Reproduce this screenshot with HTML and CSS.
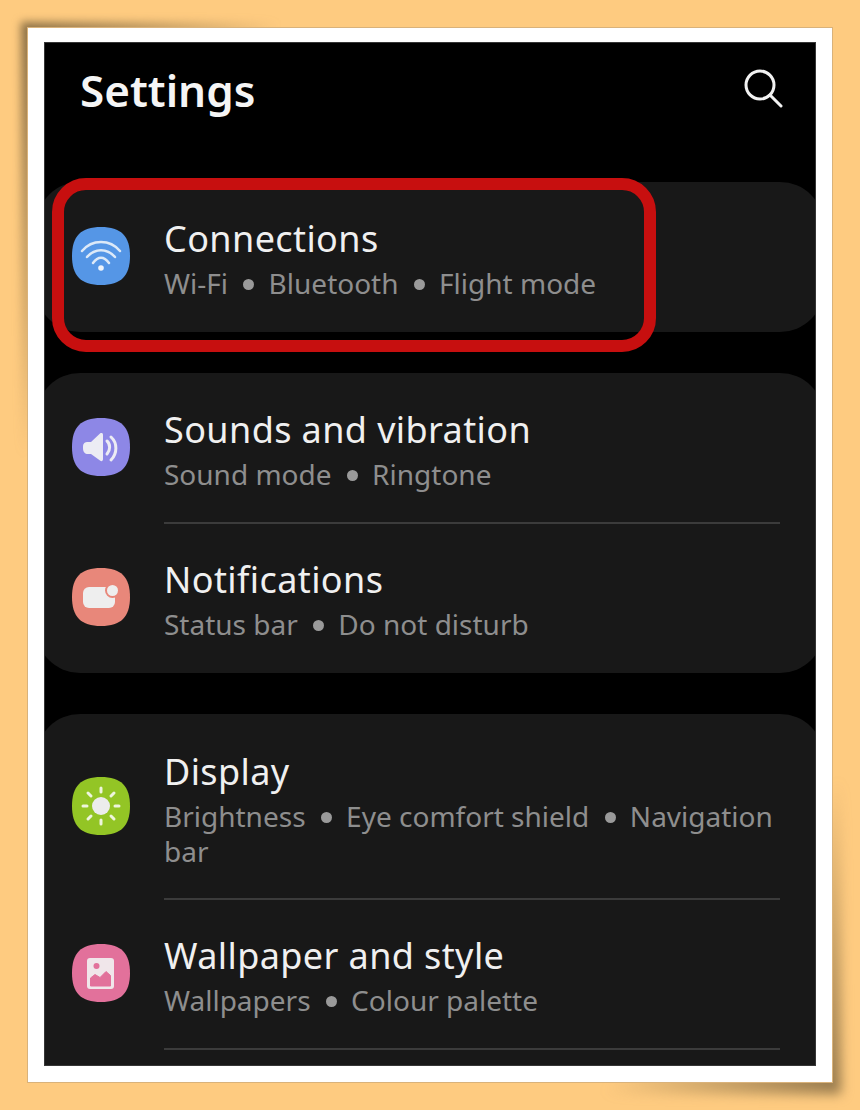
FILE: index.html
```html
<!DOCTYPE html>
<html>

<head>
  <meta charset="UTF-8">
  <title>Settings</title>
  <link rel="stylesheet" href="styles.css">
</head>

<body>

  <div class="frame">
    <div class="phone">

      <div class="header">
        <h1 class="titulo">Settings</h1>
        <svg class="lupa" width="40" height="40" viewBox="0 0 40 40">
          <circle cx="17" cy="16" r="14" fill="none" stroke="#f2f2f2" stroke-width="3" />
          <path d="M27 26 L38 37" fill="none" stroke="#f2f2f2" stroke-width="3" stroke-linecap="round" />
        </svg>
      </div>

      <div class="card">
        <div class="fila">
          <svg class="icono" width="58" height="58" viewBox="0 0 58 58">
            <path fill="#5596e6" d="M29 0C49 0 58 9 58 29S49 58 29 58 0 49 0 29 9 0 29 0Z" />
            <path d="M10 24C20 12 38 12 48 24M15 30C23 21 35 21 43 30M21 36C26 29 32 29 37 36" fill="none" stroke="#dce9f8" stroke-width="2.5" stroke-linecap="round" />
            <circle cx="29" cy="41" r="2.8" fill="#eef4fb" />
          </svg>
          <div class="texto">
            <div class="nombre">Connections</div>
            <div class="detalle">Wi-Fi <span class="punto"></span> Bluetooth <span class="punto"></span> Flight mode</div>
          </div>
        </div>
      </div>

      <div class="card">
        <div class="fila">
          <svg class="icono" width="58" height="58" viewBox="0 0 58 58">
            <path fill="#8d87e6" d="M29 0C49 0 58 9 58 29S49 58 29 58 0 49 0 29 9 0 29 0Z" />
            <path fill="#ececf4" d="M11 29C11 25 13 24 16 24H19L28 15.5C29.5 14.5 31 15 31 17V41C31 43 29.5 44 28 42.5L19 36H16C13 36 11 34 11 30Z" />
            <path d="M35 23C38.500 26 38.500 32 35 36M39 19C45.500 25 45.500 35 39 42" fill="none" stroke="#ececf4" stroke-width="3" stroke-linecap="round" />
          </svg>
          <div class="texto">
            <div class="nombre">Sounds and vibration</div>
            <div class="detalle">Sound mode <span class="punto"></span> Ringtone</div>
          </div>
        </div>
        <div class="fila con_linea">
          <svg class="icono" width="58" height="58" viewBox="0 0 58 58">
            <path fill="#e8877a" d="M29 0C49 0 58 9 58 29S49 58 29 58 0 49 0 29 9 0 29 0Z" />
            <rect x="11" y="19" width="32" height="21" rx="6" fill="#eeeeee" />
            <circle cx="40.500" cy="22.500" r="7.500" fill="#e8877a" />
            <circle cx="40.500" cy="22.500" r="5.500" fill="#eeeeee" />
          </svg>
          <div class="texto">
            <div class="nombre">Notifications</div>
            <div class="detalle">Status bar <span class="punto"></span> Do not disturb</div>
          </div>
        </div>
      </div>

      <div class="card card_ultima">
        <div class="fila fila_alta">
          <svg class="icono" width="58" height="58" viewBox="0 0 58 58">
            <path fill="#93c525" d="M29 0C49 0 58 9 58 29S49 58 29 58 0 49 0 29 9 0 29 0Z" />
            <circle cx="29" cy="29" r="9" fill="#ececec" />
            <path d="M29 11V15M29 43V47M11 29H15M43 29H47M16 16L19 19M39 39L42 42M16 42L19 39M39 19L42 16" fill="none" stroke="#eef5dc" stroke-width="3" stroke-linecap="round" />
          </svg>
          <div class="texto">
            <div class="nombre">Display</div>
            <div class="detalle">Brightness <span class="punto"></span> Eye comfort shield <span class="punto"></span> Navigation bar</div>
          </div>
        </div>
        <div class="fila con_linea">
          <svg class="icono" width="58" height="58" viewBox="0 0 58 58">
            <path fill="#e2719b" d="M29 0C49 0 58 9 58 29S49 58 29 58 0 49 0 29 9 0 29 0Z" />
            <rect x="15" y="14" width="27" height="31" rx="3" fill="#f0e6ea" />
            <circle cx="24.500" cy="22" r="3" fill="#e2719b" />
            <path fill="#e2719b" stroke="#e2719b" stroke-linejoin="round" d="M18.500 42V34L23 30.500 28 33.500 34 27.500 38.500 31.500V42Z" />
          </svg>
          <div class="texto">
            <div class="nombre">Wallpaper and style</div>
            <div class="detalle">Wallpapers <span class="punto"></span> Colour palette</div>
          </div>
        </div>
        <div class="linea_final"></div>
      </div>

      <!-- recuadro rojo encima de Connections -->
      <div class="marca"></div>
    </div>
  </div>

</body>

</html>
```

FILE: styles.css
```css
html,
body {
  margin: 0;
  padding: 0;
}

body {
  width: 860px;
  height: 1110px;
  background: #fecb80;
  font-family: "Noto Sans", sans-serif;
  overflow: hidden;
}

.frame {
  position: relative;
  width: 804px;
  height: 1054px;
  margin: 28px 0 0 28px;
  padding: 14px 16px 16px 16px;
  box-sizing: border-box;
  background: #fff;
  outline: 1px solid #d9b27a;
}

/* sombra arriba a la izquierda */
.frame::before {
  content: "";
  position: absolute;
  z-index: -1;
  left: -7px;
  top: -6px;
  width: 260px;
  height: 440px;
  background: linear-gradient(to bottom right, #8a6f45, rgba(138, 111, 69, 0) 50%);
  filter: blur(4px);
}

/* sombra abajo a la derecha */
.frame::after {
  content: "";
  position: absolute;
  z-index: -1;
  right: -9px;
  bottom: -12px;
  width: 240px;
  height: 320px;
  background: linear-gradient(to top left, #94784c, rgba(148, 120, 76, 0) 50%);
  filter: blur(6px);
}

.phone {
  position: relative;
  width: 772px;
  height: 1024px;
  background: #000;
  overflow: hidden;
}

.phone::after {
  content: "";
  position: absolute;
  top: 0;
  left: 0;
  right: 0;
  bottom: 0;
  border: 1px solid #363636;
}

.header {
  display: flex;
  justify-content: space-between;
  align-items: flex-start;
  height: 140px;
  padding: 20px 33px 0 36px;
  box-sizing: border-box;
}

.titulo {
  margin: 0;
  font-size: 44px;
  line-height: 56px;
  font-weight: 600;
  color: #f5f5f5;
}

.lupa {
  margin-top: 7px;
}

.card {
  margin: 0 -8px 41px -8px;
  background: #181818;
  border-radius: 44px;
}

.card_ultima {
  padding-bottom: 60px;
}

.fila {
  display: flex;
  align-items: center;
  height: 150px;
  padding-left: 36px;
}

.fila_alta {
  height: 185px;
  padding-top: 2px;
  box-sizing: border-box;
}

.icono {
  flex: none;
  margin-right: 34px;
  margin-bottom: 2px;
}

.fila_alta .icono {
  margin-bottom: 4px;
}

.texto {
  flex: 1;
  padding-top: 2px;
  padding-right: 50px;
}

.con_linea {
  position: relative;
}

.con_linea::before {
  content: "";
  position: absolute;
  left: 128px;
  right: 44px;
  top: -1px;
  height: 2px;
  background: #3b3b3b;
}

.linea_final {
  height: 2px;
  margin: -1px 44px 0 128px;
  background: #3b3b3b;
}

.nombre {
  font-size: 36px;
  line-height: 48px;
  letter-spacing: 0.4px;
  color: #f0f0f0;
}

.detalle {
  margin-top: 3px;
  font-size: 28px;
  line-height: 35px;
  color: #8e8e8e;
}

.punto {
  display: inline-block;
  width: 11px;
  height: 11px;
  margin: 0 7px 0 8px;
  border-radius: 50%;
  vertical-align: 4px;
  background: #9a9a9a;
}

.marca {
  position: absolute;
  left: 8px;
  top: 136px;
  width: 604px;
  height: 174px;
  box-sizing: border-box;
  border: 12px solid #c70f0f;
  border-radius: 34px;
}
```
